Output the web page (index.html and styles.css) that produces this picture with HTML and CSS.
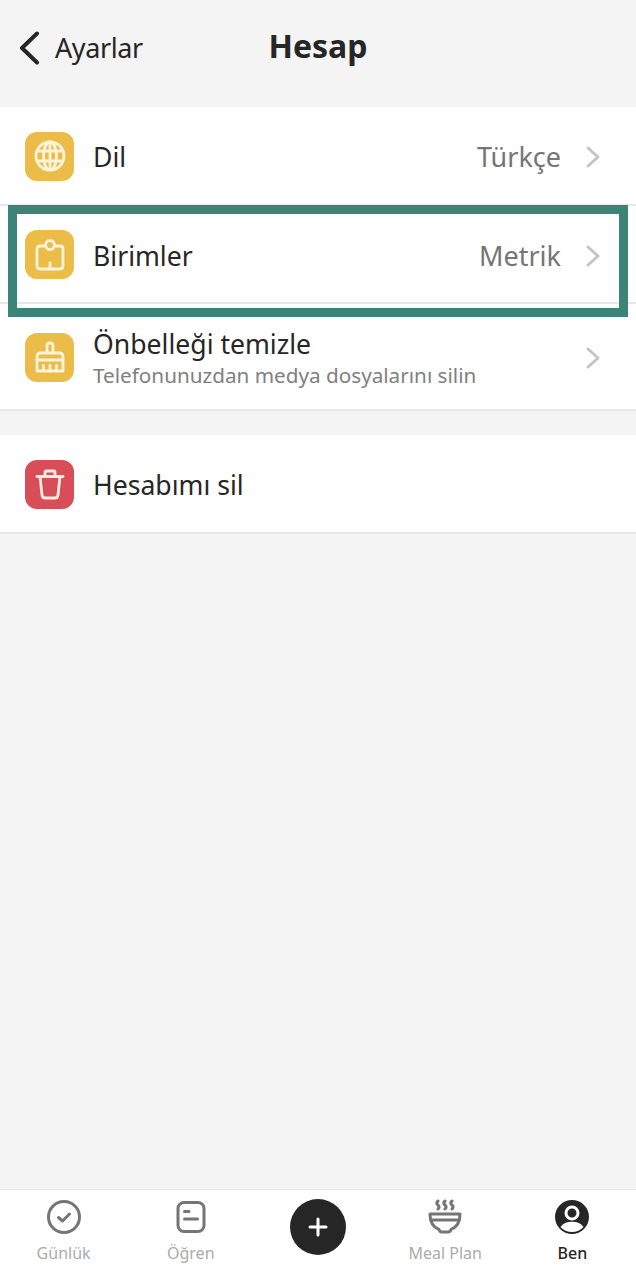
FILE: index.html
```html
<!DOCTYPE html>
<html lang="tr">

<head>
    <meta charset="UTF-8" />
    <meta name="viewport" content="width=device-width, initial-scale=1.0" />
    <title>Hesap</title>
    <link rel="stylesheet" href="styles.css">
</head>

<body>
    <div class="app">
        <header class="topbar">
            <a class="back" href="#">
                <svg class="back-icon" viewBox="0 0 22 34" width="22" height="34" fill="none" stroke="#262626" stroke-width="4" stroke-linecap="round" stroke-linejoin="round">
                    <path d="M19 2.5 L4 17 L19 31.5" />
                </svg>
                <span>Ayarlar</span>
            </a>
            <h1>Hesap</h1>
        </header>

        <main>
            <section class="group">
                <div class="row row-short">
                    <span class="badge">
                        <svg viewBox="0 0 32 32" width="32" height="32" fill="none" stroke="#fdf3d9" stroke-width="2.8">
                            <circle cx="16" cy="16" r="14" />
                            <ellipse cx="16" cy="16" rx="6.5" ry="14" />
                            <path d="M16 2 V30 M3 11 H29 M3 21 H29" />
                        </svg>
                    </span>
                    <span class="label">Dil</span>
                    <span class="value">Türkçe</span>
                    <svg class="chevron" viewBox="0 0 16 24" width="16" height="24" fill="none" stroke="#c4c4c4" stroke-width="3" stroke-linecap="round" stroke-linejoin="round">
                        <path d="M3 3 L13 12 L3 21" />
                    </svg>
                </div>
                <div class="row row-short">
                    <span class="badge">
                        <svg viewBox="0 0 32 32" width="32" height="32" fill="none" stroke="#fdf3d9" stroke-width="2.8" stroke-linejoin="round" stroke-linecap="round">
                            <path d="M10.5 7 H6 Q3 7 3 10 V27 Q3 30 6 30 H26 Q29 30 29 27 V10 Q29 7 26 7 H21.5" />
                            <circle cx="16" cy="6" r="4.5" />
                            <path d="M16 24 V30" />
                        </svg>
                    </span>
                    <span class="label">Birimler</span>
                    <span class="value">Metrik</span>
                    <svg class="chevron" viewBox="0 0 16 24" width="16" height="24" fill="none" stroke="#c4c4c4" stroke-width="3" stroke-linecap="round" stroke-linejoin="round">
                        <path d="M3 3 L13 12 L3 21" />
                    </svg>
                </div>
                <div class="row row-tall">
                    <span class="badge">
                        <svg viewBox="0 0 32 32" width="32" height="32" fill="none" stroke="#fdf3d9" stroke-width="2.8" stroke-linejoin="round" stroke-linecap="round">
                            <path d="M13 12 V4.5 Q13 2 16 2 Q19 2 19 4.5 V12" />
                            <path d="M7 12 H25 Q29 12 29 16 V30 H3 V16 Q3 12 7 12 Z" />
                            <path d="M3 19 H29 M9.5 24.5 V30 M16 24.5 V30 M22.5 24.5 V30" />
                        </svg>
                    </span>
                    <div class="text-stack">
                        <span class="label">Önbelleği temizle</span>
                        <span class="sub">Telefonunuzdan medya dosyalarını silin</span>
                    </div>
                    <svg class="chevron" viewBox="0 0 16 24" width="16" height="24" fill="none" stroke="#c4c4c4" stroke-width="3" stroke-linecap="round" stroke-linejoin="round">
                        <path d="M3 3 L13 12 L3 21" />
                    </svg>
                </div>
            </section>

            <section class="group group-danger">
                <div class="row row-short">
                    <span class="badge badge-red">
                        <svg viewBox="0 0 32 32" width="32" height="32" fill="none" stroke="#fdeee0" stroke-width="2.8" stroke-linejoin="round" stroke-linecap="round">
                            <path d="M3 8.5 H29" />
                            <path d="M11 8.5 V4 Q11 3 12 3 H20 Q21 3 21 4 V8.5" />
                            <path d="M6 8.5 L8 27 Q8.3 30 11 30 H21 Q23.7 30 24 27 L26 8.5" />
                        </svg>
                    </span>
                    <span class="label">Hesabımı sil</span>
                </div>
            </section>
        </main>

        <div class="highlight"></div>

        <nav class="tabbar">
            <a class="tab" href="#">
                <svg viewBox="0 0 36 36" width="36" height="36" fill="none" stroke="#757575" stroke-width="3" stroke-linecap="round" stroke-linejoin="round">
                    <circle cx="18" cy="18" r="15.5" />
                    <path d="M12.5 18.5 L16.5 22 L23.5 15" />
                </svg>
                <span>Günlük</span>
            </a>
            <a class="tab" href="#">
                <svg viewBox="0 0 36 36" width="36" height="36" fill="none" stroke="#757575" stroke-width="3" stroke-linecap="round">
                    <rect x="5" y="3.5" width="26" height="29" rx="6" />
                    <path d="M11.5 12.5 H16 M11.5 20 H24.5" />
                </svg>
                <span>Öğren</span>
            </a>
            <a class="tab tab-add" href="#">
                <span class="add-btn">
                    <svg viewBox="0 0 20 20" width="20" height="20" fill="none" stroke="#ffffff" stroke-width="3" stroke-linecap="round">
                        <path d="M10 2 V18 M2 10 H18" />
                    </svg>
                </span>
            </a>
            <a class="tab" href="#">
                <svg viewBox="0 0 36 36" width="36" height="36" fill="none" stroke="#757575" stroke-width="3" stroke-linecap="round" stroke-linejoin="round">
                    <path d="M11 2 Q8.5 4 11 6 Q13 8 11 10 M18 2 Q15.5 4 18 6 Q20 8 18 10 M25 2 Q22.5 4 25 6 Q27 8 25 10" />
                    <path d="M3 15 H33 Q33 27 24 30.5 Q23.5 33 21 33 H15 Q12.5 33 12 30.5 Q3 27 3 15 Z" />
                    <path d="M4 21 H32" />
                </svg>
                <span>Meal Plan</span>
            </a>
            <a class="tab tab-active" href="#">
                <svg viewBox="0 0 36 36" width="36" height="36">
                    <circle cx="18" cy="18" r="17" fill="#262626" />
                    <circle cx="18" cy="14" r="6" fill="none" stroke="#ffffff" stroke-width="3" />
                    <path d="M6.5 28 Q10 22.8 18 22.8 Q26 22.8 29.5 28 Q25 33 18 33 Q11 33 6.5 28 Z" fill="#ffffff" />
                </svg>
                <span>Ben</span>
            </a>
        </nav>
    </div>
</body>

</html>
```

FILE: styles.css
```css
* {
    margin: 0;
    padding: 0;
    box-sizing: border-box;
}

body {
    font-family: 'Noto Sans', sans-serif;
    background-color: #f4f4f4;
    color: #262626;
}

a {
    color: inherit;
    text-decoration: none;
}

.app {
    position: relative;
    width: 636px;
    height: 1280px;
    display: flex;
    flex-direction: column;
    overflow: hidden;
}

.topbar {
    position: relative;
    height: 107px;
    flex-shrink: 0;
    display: flex;
    justify-content: center;
    padding-top: 25px;
}

.topbar h1 {
    font-size: 32px;
    line-height: 42px;
    font-weight: 700;
}

.back {
    position: absolute;
    left: 18px;
    top: 31px;
    display: flex;
    align-items: center;
    gap: 15px;
    font-size: 27px;
    line-height: 34px;
    letter-spacing: -0.4px;
}

main {
    flex: 1;
}

.group {
    background-color: white;
}

.group-danger {
    margin-top: 24.5px;
}

.row {
    display: flex;
    align-items: center;
    padding: 2px 35px 0 25px;
    border-bottom: 2px solid #e8e8e8;
}

.row-short {
    height: 98.5px;
}

.row-tall {
    height: 106.5px;
}

.badge {
    width: 49px;
    height: 49px;
    flex-shrink: 0;
    display: flex;
    align-items: center;
    justify-content: center;
    border-radius: 12px;
    background-color: #ebbd48;
    margin-right: 19px;
}

.badge-red {
    background-color: #d94d58;
}

.label {
    font-size: 26.6px;
    line-height: 34px;
    padding-top: 2px;
    color: #262626;
}

.value {
    margin-left: auto;
    font-size: 27px;
    line-height: 34px;
    padding-top: 2px;
    color: #757575;
}

.chevron {
    margin-left: 24px;
    margin-top: 2px;
    flex-shrink: 0;
}

.text-stack {
    display: flex;
    flex-direction: column;
    flex: 1;
}

.sub {
    font-size: 20.7px;
    line-height: 29px;
    color: #808080;
}

.highlight {
    position: absolute;
    left: 8px;
    top: 205px;
    width: 620px;
    height: 112px;
    border: 9px solid #3c8378;
}

.tabbar {
    height: 91px;
    flex-shrink: 0;
    background-color: white;
    border-top: 1px solid #e8e8e8;
    display: grid;
    grid-template-columns: repeat(5, 127.2px);
}

.tab {
    display: flex;
    flex-direction: column;
    align-items: center;
    padding-top: 9px;
    gap: 7px;
    font-size: 16px;
    line-height: 22px;
    color: #ababab;
}

.tab-active {
    color: #262626;
    font-weight: 500;
}

.tab-add {
    padding-top: 9px;
}

.add-btn {
    width: 56px;
    height: 56px;
    border-radius: 50%;
    background-color: #262626;
    display: flex;
    align-items: center;
    justify-content: center;
}
```
